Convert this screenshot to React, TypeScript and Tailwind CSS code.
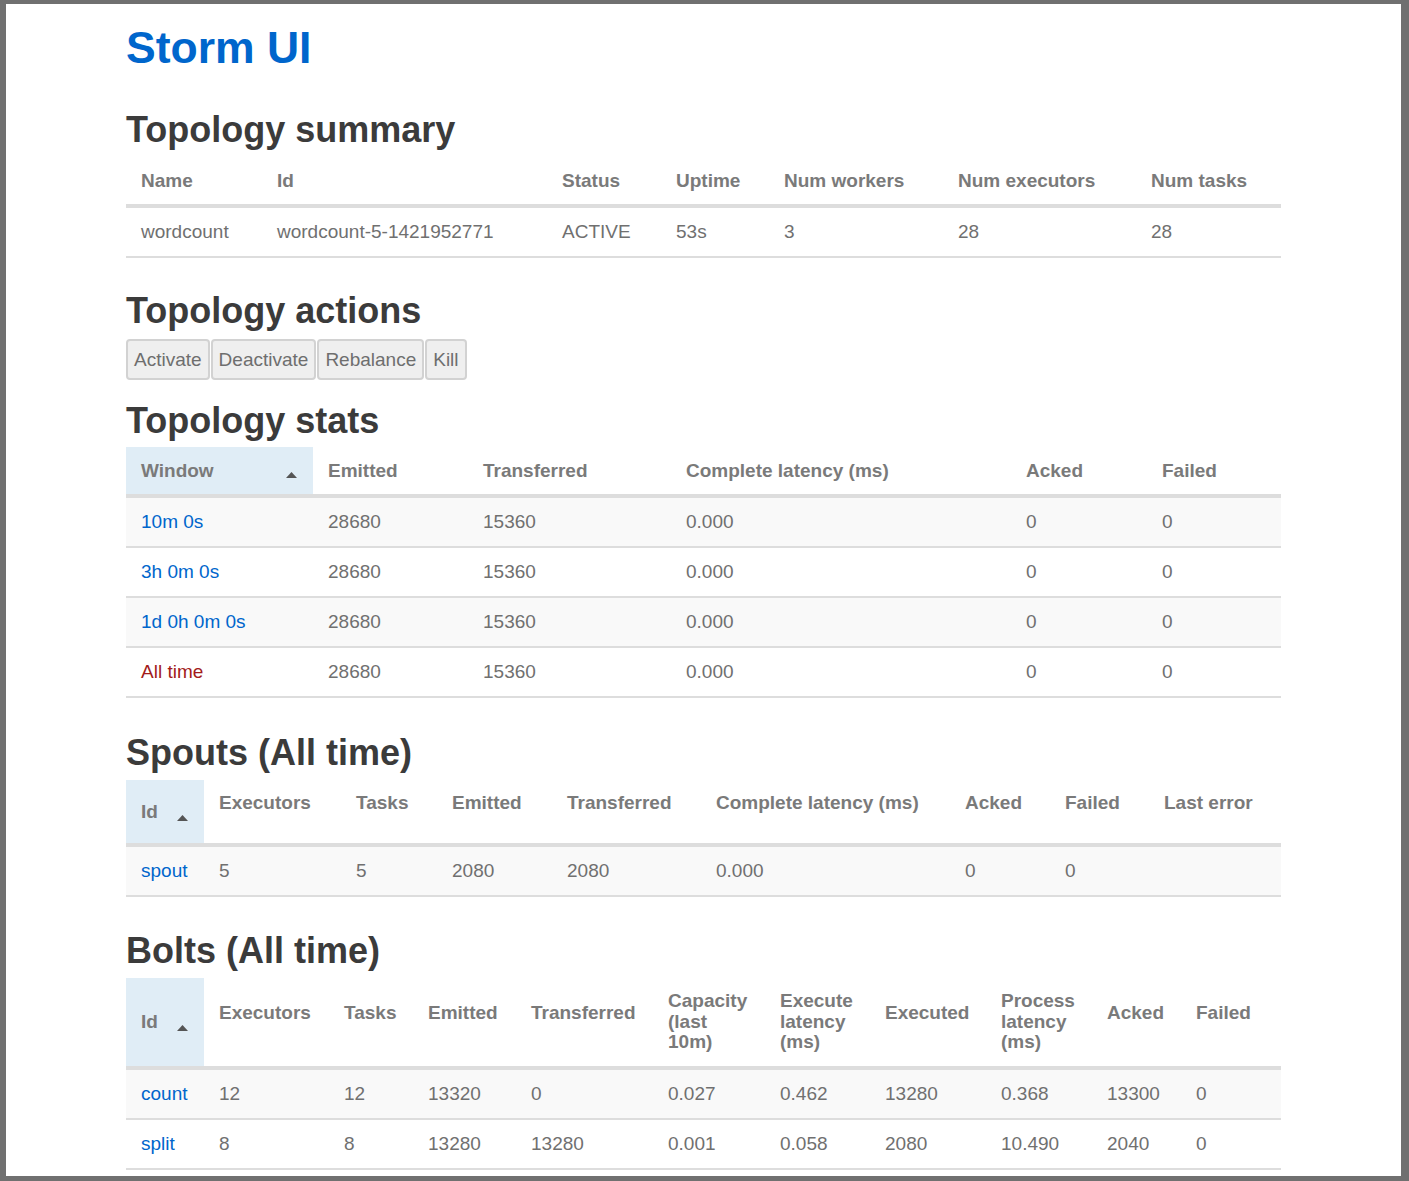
import React from "react";

const font = { fontFamily: '"Liberation Sans", Arial, Helvetica, sans-serif' };

function SortArrow({ offset }: { offset: string }) {
    return (
        <svg className={`absolute right-[16px] ${offset}`} width="11" height="6" viewBox="0 0 11 6">
            <polygon points="5.5,0 11,6 0,6" fill="#555" />
        </svg>
    );
}

function Heading({ children, className }: { children: React.ReactNode; className: string }) {
    return <h2 className={`text-[36px] leading-[40px] font-bold text-[#3b3b3b] ${className}`}>{children}</h2>;
}

function Cols({ widths }: { widths: string[] }) {
    return (
        <colgroup>
            {widths.map((w, i) => (
                <col key={i} className={w} />
            ))}
        </colgroup>
    );
}

const th = "text-left font-bold text-[#7a7a7a] px-[15px] border-b-[4px] border-[#dddddd]";
const td = "px-[15px] py-[10px] leading-[28px] border-b-2 border-[#dddddd] text-[#707070]";

const stats = [
    { w: "10m 0s", red: false },
    { w: "3h 0m 0s", red: false },
    { w: "1d 0h 0m 0s", red: false },
    { w: "All time", red: true },
];

const bolts = [
    ["count", "12", "12", "13320", "0", "0.027", "0.462", "13280", "0.368", "13300", "0"],
    ["split", "8", "8", "13280", "13280", "0.001", "0.058", "2080", "10.490", "2040", "0"],
];

export default function App() {
    return (
        <div className="w-[1409px] h-[1181px] bg-[#707070] pt-[4px] pl-[6px] pr-[8px] pb-[5px]" style={font}>
            <div className="w-full h-full bg-white overflow-hidden">
                <div className="w-[1155px] mx-auto text-[19px]">
                    <h1 className="mt-[20px] text-[44.5px] leading-[48px] font-bold text-[#0066cc]">Storm UI</h1>

                    <Heading className="mt-[38px] mb-[7px]">Topology summary</Heading>
                    <table className="w-[1155px] table-fixed border-collapse">
                        <Cols widths={["w-[136px]", "w-[285px]", "w-[114px]", "w-[108px]", "w-[174px]", "w-[193px]", "w-[145px]"]} />
                        <thead>
                            <tr>
                                {["Name", "Id", "Status", "Uptime", "Num workers", "Num executors", "Num tasks"].map((h) => (
                                    <th key={h} className={`${th} py-[10px] leading-[27px]`}>{h}</th>
                                ))}
                            </tr>
                        </thead>
                        <tbody>
                            <tr>
                                {["wordcount", "wordcount-5-1421952771", "ACTIVE", "53s", "3", "28", "28"].map((v, i) => (
                                    <td key={i} className={td}>{v}</td>
                                ))}
                            </tr>
                        </tbody>
                    </table>

                    <Heading className="mt-[33px] mb-[8px]">Topology actions</Heading>
                    <div className="flex gap-[1px]">
                        {["Activate", "Deactivate", "Rebalance", "Kill"].map((b) => (
                            <button key={b} className="h-[41px] px-[6px] leading-[27px] border-2 border-[#d2d2d2] bg-[#efefef] rounded-[4px] text-[#6e6e6e] text-[19px]">
                                {b}
                            </button>
                        ))}
                    </div>

                    <Heading className="mt-[21px] mb-[6px]">Topology stats</Heading>
                    <table className="w-[1155px] table-fixed border-collapse">
                        <Cols widths={["w-[187px]", "w-[155px]", "w-[203px]", "w-[340px]", "w-[136px]", "w-[134px]"]} />
                        <thead>
                            <tr>
                                <th className={`${th} py-[10px] leading-[27px] bg-[#e0edf6] relative`}>
                                    Window
                                    <SortArrow offset="top-[25px]" />
                                </th>
                                {["Emitted", "Transferred", "Complete latency (ms)", "Acked", "Failed"].map((h) => (
                                    <th key={h} className={`${th} py-[10px] leading-[27px]`}>{h}</th>
                                ))}
                            </tr>
                        </thead>
                        <tbody>
                            {stats.map((r, i) => (
                                <tr key={r.w} className={i % 2 === 0 ? "bg-[#f9f9f9]" : "bg-white"}>
                                    <td className={`${td} ${r.red ? "!text-[#a31b1b]" : "!text-[#0066cc]"}`}>{r.w}</td>
                                    <td className={td}>28680</td>
                                    <td className={td}>15360</td>
                                    <td className={td}>0.000</td>
                                    <td className={td}>0</td>
                                    <td className={td}>0</td>
                                </tr>
                            ))}
                        </tbody>
                    </table>

                    <Heading className="mt-[35px] mb-[7px]">Spouts (All time)</Heading>
                    <table className="w-[1155px] table-fixed border-collapse">
                        <Cols widths={["w-[78px]", "w-[137px]", "w-[96px]", "w-[115px]", "w-[149px]", "w-[249px]", "w-[100px]", "w-[99px]", "w-[132px]"]} />
                        <thead>
                            <tr className="h-[65px]">
                                <th className={`${th} leading-[28px] bg-[#e0edf6] relative align-middle`}>
                                    Id
                                    <SortArrow offset="top-[35px]" />
                                </th>
                                {["Executors", "Tasks", "Emitted", "Transferred", "Complete latency (ms)", "Acked", "Failed", "Last error"].map((h) => (
                                    <th key={h} className={`${th} leading-[28px] pb-[17px] align-middle whitespace-nowrap`}>{h}</th>
                                ))}
                            </tr>
                        </thead>
                        <tbody>
                            <tr className="bg-[#f9f9f9]">
                                <td className={`${td} !text-[#0066cc]`}>spout</td>
                                {["5", "5", "2080", "2080", "0.000", "0", "0", ""].map((v, i) => (
                                    <td key={i} className={td}>{v}</td>
                                ))}
                            </tr>
                        </tbody>
                    </table>

                    <Heading className="mt-[34px] mb-[7px]">Bolts (All time)</Heading>
                    <table className="w-[1155px] table-fixed border-collapse">
                        <Cols widths={["w-[78px]", "w-[125px]", "w-[84px]", "w-[103px]", "w-[137px]", "w-[112px]", "w-[105px]", "w-[116px]", "w-[106px]", "w-[89px]", "w-[100px]"]} />
                        <thead>
                            <tr className="h-[90px]">
                                <th className={`${th} leading-[28px] bg-[#e0edf6] relative align-middle`}>
                                    Id
                                    <SortArrow offset="top-[47px]" />
                                </th>
                                {["Executors", "Tasks", "Emitted", "Transferred"].map((h) => (
                                    <th key={h} className={`${th} leading-[28px] pb-[18px] align-middle whitespace-nowrap`}>{h}</th>
                                ))}
                                <th className={`${th} leading-[20.5px] align-middle pr-0`}>Capacity<br />(last<br />10m)</th>
                                <th className={`${th} leading-[20.5px] align-middle pr-0`}>Execute<br />latency<br />(ms)</th>
                                <th className={`${th} leading-[28px] pb-[18px] align-middle`}>Executed</th>
                                <th className={`${th} leading-[20.5px] align-middle pr-0`}>Process<br />latency<br />(ms)</th>
                                <th className={`${th} leading-[28px] pb-[18px] align-middle`}>Acked</th>
                                <th className={`${th} leading-[28px] pb-[18px] align-middle`}>Failed</th>
                            </tr>
                        </thead>
                        <tbody>
                            {bolts.map((r, i) => (
                                <tr key={r[0]} className={i % 2 === 0 ? "bg-[#f9f9f9]" : "bg-white"}>
                                    {r.map((v, j) => (
                                        <td key={j} className={`${td} ${j === 0 ? "!text-[#0066cc]" : ""}`}>{v}</td>
                                    ))}
                                </tr>
                            ))}
                        </tbody>
                    </table>
                </div>
            </div>
        </div>
    );
}
